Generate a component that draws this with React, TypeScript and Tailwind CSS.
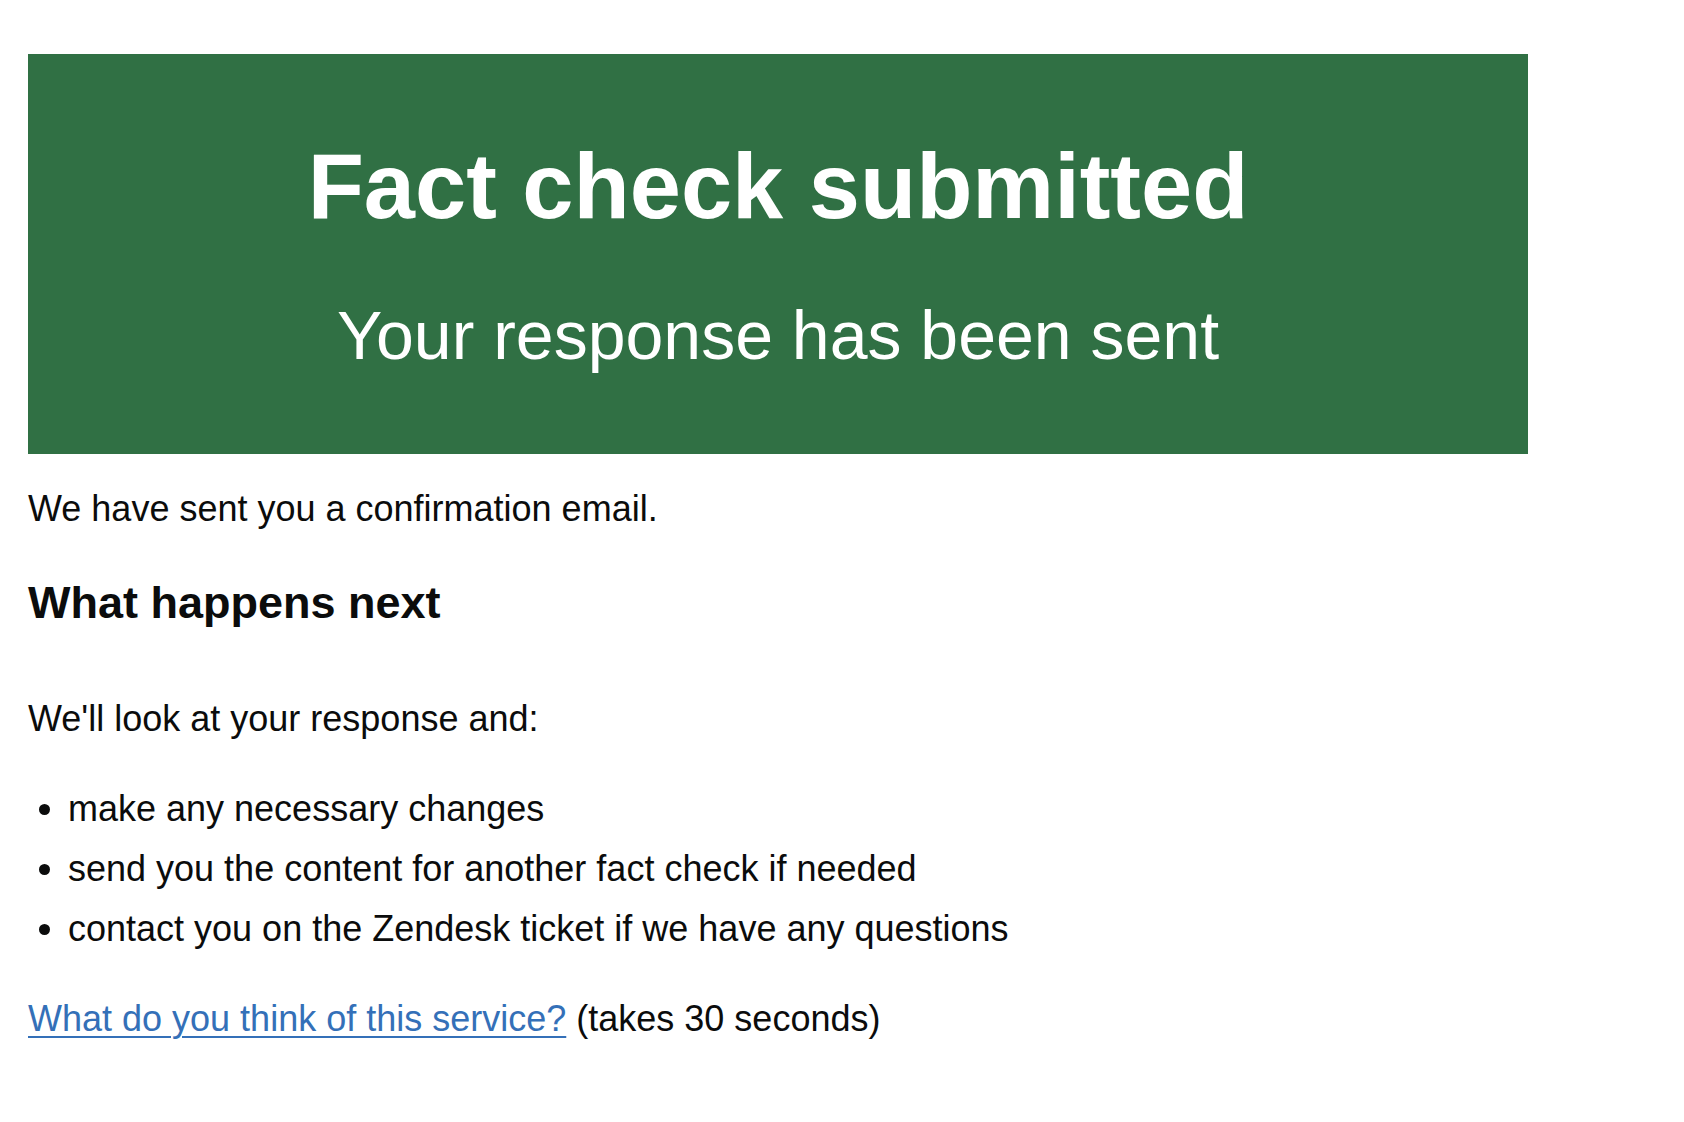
export default function App() {
  return (
    <div
      className="min-h-screen bg-white pt-[54px] pl-[28px] text-[#0b0c0c]"
      style={{ fontFamily: '"Liberation Sans", Arial, sans-serif' }}
    >
      <div className="w-[1500px]">
        <div className="flex h-[400px] flex-col items-center bg-[#307044] pt-[82px] text-center text-white">
          <h1 className="text-[92px] font-bold leading-[100px]">Fact check submitted</h1>
          <div className="mt-[59px] text-[68px] leading-[80px]">Your response has been sent</div>
        </div>
        <p className="mt-[30px] text-[36px] leading-[50px]">We have sent you a confirmation email.</p>
        <h2 className="mt-[39px] text-[45px] font-bold leading-[60px]">What happens next</h2>
        <p className="mt-[61px] text-[36px] leading-[50px]">We'll look at your response and:</p>
        <ul className="mt-[40px] list-disc pl-[40px] text-[36px] leading-[50px]">
          <li className="mb-[10px]">make any necessary changes</li>
          <li className="mb-[10px]">send you the content for another fact check if needed</li>
          <li>contact you on the Zendesk ticket if we have any questions</li>
        </ul>
        <p className="mt-[40px] text-[36px] leading-[50px]">
          <a
            href="#"
            className="text-[#3470b8] underline decoration-2 underline-offset-[5px]"
          >
            What do you think of this service?
          </a>{' '}
          (takes 30 seconds)
        </p>
      </div>
    </div>
  );
}
